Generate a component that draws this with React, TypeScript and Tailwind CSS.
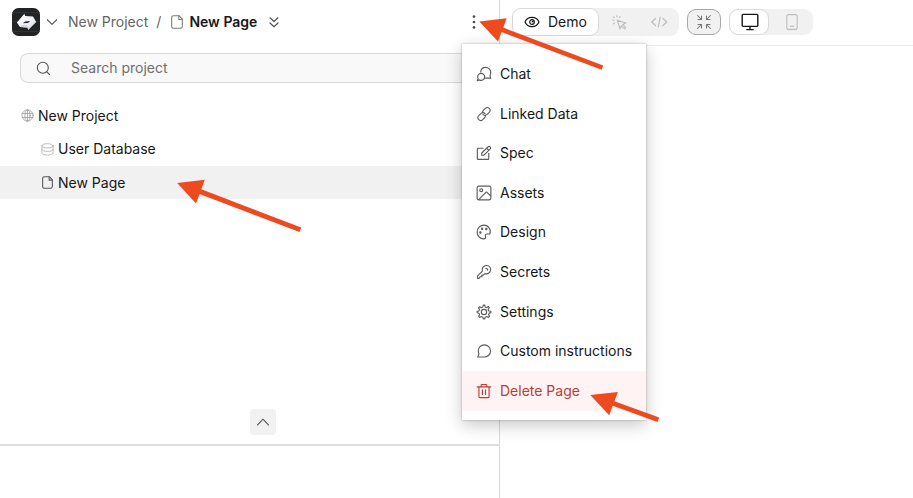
import React from "react";

type IconProps = { className?: string; children: React.ReactNode; sw?: number; box?: string };

function Icon({ className = "", children, sw = 1.5, box = "0 0 24 24" }: IconProps) {
  return (
    <svg
      viewBox={box}
      className={`shrink-0 ${className}`}
      fill="none"
      stroke="currentColor"
      strokeWidth={sw}
      strokeLinecap="round"
      strokeLinejoin="round"
    >
      {children}
    </svg>
  );
}

const PageShape = () => (
  <>
    <path d="M.7 2.6C.7 1.5 1.5 .7 2.6 .7H8L11.3 4.2V11.4C11.3 12.5 10.5 13.3 9.4 13.3H2.6C1.5 13.3 .7 12.5 .7 11.4Z" />
    <path d="M7.8 .9V4.4H11.1" />
  </>
);

const icons = {
  chat: (
    <>
      <path d="M7.5 22C10.54 22 13 19.54 13 16.5C13 13.46 10.54 11 7.5 11C4.46 11 2 13.46 2 16.5C2 17.5 2.27 18.44 2.73 19.25L1.4 22.6L4.75 21.27C5.56 21.73 6.5 22 7.5 22Z" />
      <path d="M13.2 18.6H22.6L21.4 14.6C22.1 13.3 22.6 11.6 22.6 9.7C22.6 5.2 19.1 1.5 14.7 1.5C10.4 1.5 7.2 4.6 6.8 8.9" />
    </>
  ),
  link: (
    <g transform="rotate(-45 12 12) translate(.6 .6) scale(.95)">
      <path d="M13.6 12.8C13.6 10 11.6 7.8 8.9 7.8H4C1.3 7.8 -.8 9.8 -.8 12.4C-.8 15 1.3 17 4 17H8.2C9.6 17 10.8 16.5 11.7 15.6" />
      <path d="M10.4 11.2C10.4 14 12.4 16.2 15.1 16.2H20C22.7 16.2 24.8 14.2 24.8 11.6C24.8 9 22.7 7 20 7H15.8C14.4 7 13.2 7.5 12.3 8.4" />
    </g>
  ),
  spec: (
    <>
      <path d="M19.5 12.5V21C19.5 21.6 19.1 22 18.5 22H2.5C1.9 22 1.5 21.6 1.5 21V5.5C1.5 4.9 1.9 4.5 2.5 4.5H10.5" />
      <path d="M8.5 15.5V12L18.4 2.2C19.2 1.4 20.6 1.4 21.4 2.2L21.8 2.6C22.6 3.4 22.6 4.8 21.8 5.6L12 15.5ZM16.3 4.6L19.4 7.7" />
    </>
  ),
  assets: (
    <>
      <rect x="1.2" y="1.2" width="21.6" height="21.6" rx="2.5" />
      <circle cx="7.6" cy="7.6" r="2.3" />
      <path d="M4 22L15.8 10.3L22.5 16.5" />
    </>
  ),
  design: (
    <>
      <path d="M21 15C24 8.5 18.8 1.2 12 1.2C5.8 1.2 1.2 6.1 1.2 12C1.2 18 5.5 22.8 11.4 22.8C14.4 22.8 15.2 21.2 14.4 19C13.5 16.4 14.6 14.9 17 15.1Z" />
      <circle cx="6.3" cy="12.8" r="1" fill="currentColor" />
      <circle cx="9" cy="7" r="1" fill="currentColor" />
      <circle cx="15.6" cy="7.3" r="1" fill="currentColor" />
    </>
  ),
  key: (
    <>
      <path d="M9.4 10.6C8.2 6.4 10.9 1.8 15.8 1.8C19.4 1.8 22.4 4.6 22.4 8.2C22.4 13 17.6 16 13.4 14.6L11 17H8.6V19.4H6.2L4.2 22H1.8V18.2Z" />
      <path d="M15 6.4C16.8 6.2 17.9 7.4 17.7 9" />
    </>
  ),
  settings: (
    <>
      <circle cx="12" cy="12" r="4.2" />
      <path d="M19.6 10.4L18.5 7.7L20.3 5L18.6 3.3L16.3 5.2L13.9 4.1L13.2 1.2H10.8L10.1 4.1L7.7 5.2L5.2 3.7L3.4 5.4L4.9 8L3.9 10.4L1.2 11V13.2L4 13.9L5 16.4L3.6 18.9L5.2 20.6L7.8 19.2L10.2 20.2L10.9 22.8H13.2L13.9 20.2L16.4 19.2L19 20.6L20.6 18.8L19.2 16.2L20.2 13.8L22.8 13V10.9Z" />
    </>
  ),
  bubble: (
    <path d="M12.6 21.5C18 21.5 22.3 17.2 22.3 12C22.3 6.6 18 2.3 12.6 2.3C7.2 2.3 2.9 6.6 2.9 12C2.9 13.8 3.3 15.1 4.1 16.5L2.2 21.5Z" />
  ),
  trash: (
    <>
      <path d="M20 6V20.5C20 21.8 19.3 22.5 18 22.5H6C4.7 22.5 4 21.8 4 20.5V6M1.2 5.5H22.8M7.5 5.5V3.3C7.5 2.3 8 1.8 9 1.8H15C16 1.8 16.5 2.3 16.5 3.3V5.5" />
      <path d="M9.6 10V17.5M14.4 10V17.5" />
    </>
  ),
};

const menu = [
  { label: "Chat", icon: icons.chat },
  { label: "Linked Data", icon: icons.link },
  { label: "Spec", icon: icons.spec },
  { label: "Assets", icon: icons.assets },
  { label: "Design", icon: icons.design },
  { label: "Secrets", icon: icons.key },
  { label: "Settings", icon: icons.settings },
  { label: "Custom instructions", icon: icons.bubble },
  { label: "Delete Page", icon: icons.trash, danger: true },
];

function Logo() {
  return (
    <svg viewBox="0 0 28 28" className="h-7 w-7 shrink-0">
      <defs>
        <linearGradient id="mark" x1="0" y1="0" x2="1" y2="1">
          <stop offset="0" stopColor="#ffffff" />
          <stop offset=".55" stopColor="#f0f0f7" />
          <stop offset="1" stopColor="#d2d3e0" />
        </linearGradient>
      </defs>
      <rect width="28" height="28" rx="6.5" fill="#222324" />
      <path d="M0 4.5H28M0 13.5H28M0 23.5H28" stroke="#3a3b3d" strokeWidth=".6" />
      <path
        d="M12.4 5.8L13.2 8L21 8.6L24.2 14L16.2 22L15.4 19.6L8 19L4.9 14.4Z"
        fill="url(#mark)"
      />
      <path d="M8 19L9.6 17L15 17L15.4 19.6Z" fill="#d4d5e2" />
      <path d="M10.8 15.3L13.2 13.4L18.2 12.9L16 15Z" fill="#292a2e" />
    </svg>
  );
}

function TopLeft() {
  return (
    <header className="flex h-[44px] items-center pl-3 pr-[18px]">
      <Logo />
      <Icon className="ml-[7px] h-[10px] w-[10px] text-[#555]" box="0 0 10 10" sw={1.1}>
        <path d="M.3 2.7L5 7.4L9.7 2.7" />
      </Icon>
      <span className="ml-[11px] text-[#646464]">New Project</span>
      <span className="ml-2 text-[#646464]">/</span>
      <Icon className="ml-[10px] h-[14px] w-[12px] text-[#777]" box="0 0 12 14" sw={1.05}>
        <PageShape />
      </Icon>
      <span className="ml-[6px] font-semibold text-[#171717]">New Page</span>
      <Icon className="ml-[12px] h-[11px] w-[10px] text-[#555]" box="0 0 10 11" sw={1.2}>
        <path d="M1 .8L5 4.5L9 .8M1 6L5 9.8L9 6" />
      </Icon>
      <svg viewBox="0 0 4 14" className="ml-auto mr-[5px] h-[14px] w-1 shrink-0" fill="#4d4d4d">
        <circle cx="2" cy="1.6" r="1.35" />
        <circle cx="2" cy="7" r="1.35" />
        <circle cx="2" cy="12.4" r="1.35" />
      </svg>
    </header>
  );
}

function Sidebar() {
  return (
    <aside className="flex w-[500px] shrink-0 flex-col border-r border-[#d9d9d9]">
      <TopLeft />
      <div className="ml-5 mt-[9px] flex h-[30px] items-center rounded-l-lg border border-r-0 border-[#d9d9d9] bg-[#f9f9f9] pl-[15px]">
        <Icon className="h-[15px] w-[15px] text-[#555]" box="0 0 15 15" sw={1.1}>
          <circle cx="6.8" cy="6.8" r="5.5" />
          <path d="M10.8 10.8L13.5 13.5" />
        </Icon>
        <span className="ml-5 text-[#6f6f6f]">Search project</span>
      </div>
      <div className="mt-[16px] flex h-[33px] items-center pl-[21px]">
        <Icon className="h-[13px] w-[13px] text-[#9b9b9b]" box="0 0 13 13" sw={0.8}>
          <circle cx="6.5" cy="6.5" r="5.6" />
          <ellipse cx="6.5" cy="6.5" rx="2.6" ry="5.6" />
          <path d="M1.3 4.5H11.7M1.3 8.5H11.7M6.5 1V12" />
        </Icon>
        <span className="ml-1 text-[#171717]">New Project</span>
      </div>
      <div className="flex h-[34px] items-center pl-[41px]">
        <Icon className="h-[13px] w-[13px] text-[#b3b3b3]" box="0 0 13 13" sw={0.9}>
          <ellipse cx="6.5" cy="2.8" rx="5.6" ry="2.1" />
          <path d="M.9 2.8V10C.9 12.8 12.1 12.8 12.1 10V2.8M.9 6.4C.9 9.2 12.1 9.2 12.1 6.4" />
        </Icon>
        <span className="ml-1 text-[#171717]">User Database</span>
      </div>
      <div className="flex h-[33px] items-center bg-[#f1f1f1] pl-[42px]">
        <Icon className="h-[13px] w-[11px] text-[#555]" box="0 0 12 14" sw={1.15}>
          <PageShape />
        </Icon>
        <span className="ml-[5px] text-[#171717]">New Page</span>
      </div>
      <div className="mt-auto flex h-[35px] justify-center pl-[27px]">
        <button className="flex h-[26px] w-[26px] items-center justify-center rounded-[4px] bg-[#f1f1f1]">
          <Icon className="h-[12px] w-[12px] text-[#5d5d5d]" box="0 0 12 12" sw={1.1}>
            <path d="M.5 9L6 3.2L11.5 9" />
          </Icon>
        </button>
      </div>
      <div className="h-[54px] border-t-2 border-[#dedede]" />
    </aside>
  );
}

function Toolbar() {
  return (
    <header className="flex h-[46px] items-center border-b border-[#ececec] pb-px pl-[12px]">
      <div className="flex h-[28px] w-[167px] items-center rounded-[9px] bg-[#f1f1f1]">
        <button className="flex h-[28px] w-[87px] items-center rounded-[9px] border border-[#d9d9d9] bg-white pl-[11px]">
          <Icon className="h-[16px] w-[16px] text-[#171717]" box="0 0 16 16" sw={1.2}>
            <path d="M1 8C3.6 1.9 12.4 1.9 15 8C12.4 14.1 3.6 14.1 1 8Z" />
            <circle cx="8" cy="8" r="2.3" />
            <path d="M8.2 7.8L9 7.2" />
          </Icon>
          <span className="ml-[8px] text-[#171717]">Demo</span>
        </button>
        <Icon className="ml-[13px] h-[15px] w-[15px] text-[#bcbcbc]" box="0 0 15 15" sw={1.1}>
          <path d="M5.2 5.2L14 8L10.7 9.4L13.7 12.6L12.5 13.8L9.4 10.7L8 14Z" />
          <path d="M4.8 .8L5.1 2M1.3 1.8L2.2 2.7M.8 5L2 5.2M1.5 8.8L2.4 7.9M8.2 1.6L7.5 2.5" />
        </Icon>
        <Icon className="ml-[24px] h-[16px] w-[17px] text-[#bcbcbc]" box="0 0 17 16" sw={1.2}>
          <path d="M4.5 4.5L.8 8L4.5 11.5M12 4.5L15.7 8L12 11.5M9.2 3L7.3 13" />
        </Icon>
      </div>
      <button className="ml-[8px] flex h-[26px] w-[34px] items-center justify-center rounded-[9px] border border-[#a8a8a8] bg-[#f1f1f1]">
        <Icon className="h-[16px] w-[16px] text-[#777]" box="0 0 16 16" sw={1.05}>
          <path d="M1.5 1.5L5.5 5.5M5.5 2V5.5H2M14.5 1.5L10.5 5.5M10.5 2V5.5H14M1.5 14.5L5.5 10.5M2 10.5H5.5V14M14.5 14.5L10.5 10.5M10.5 14V10.5H14" />
        </Icon>
      </button>
      <div className="ml-[8px] flex h-[26px] w-[84px] items-center rounded-[9px] bg-[#f1f1f1]">
        <button className="flex h-[26px] w-[40px] items-center justify-center rounded-[9px] border border-[#d9d9d9] bg-white">
          <Icon className="ml-px h-[18px] w-[18px] text-[#171717]" box="0 0 18 18" sw={1.4}>
            <rect x="1.2" y="1.4" width="15.6" height="12" rx="1" />
            <path d="M9 13.4V16.4M5.8 16.6H12.2" />
          </Icon>
        </button>
        <Icon className="ml-[17px] h-[16px] w-[12px] text-[#bcbcbc]" box="0 0 12 16" sw={1.1}>
          <rect x=".8" y=".6" width="10.4" height="14.8" rx="2" />
          <path d="M4.5 12.4H7.5" />
        </Icon>
      </div>
    </header>
  );
}

function PageMenu() {
  return (
    <div className="absolute left-[462px] top-[44px] w-[184px] bg-white pb-[9.6px] pt-[10.2px] shadow-[0_0_2px_rgba(0,0,0,0.3),0_5px_16px_rgba(0,0,0,0.22)]">
      {menu.map((m) => (
        <div
          key={m.label}
          className={`flex h-[39.6px] items-center pl-[14px] ${m.danger ? "bg-[#fff4f3] text-[#bd3b36]" : "text-[#171717]"}`}
        >
          <Icon className={`h-4 w-4 ${m.danger ? "text-[#bd3b36]" : "text-[#5c5c5c]"}`} sw={1.8} box="-.6 -.6 25.2 25.2">
            {m.icon}
          </Icon>
          <span className="ml-2 whitespace-nowrap">{m.label}</span>
        </div>
      ))}
    </div>
  );
}

function Arrows() {
  return (
    <svg className="pointer-events-none absolute inset-0 h-[498px] w-[913px]" viewBox="0 0 913 498" fill="#ed4a20">
      <path d="M479.3 21.6L506.7 18.2L503.3 27.6L603.2 65.4L601.6 69.8L501.6 32L498 41.4Z" />
      <path d="M177.2 183.1L204.8 179.8L201.3 189.3L301.2 227.4L299.5 232L199.6 194L196 203.5Z" />
      <path d="M590.3 395.1L617.9 391.9L614.4 401.3L659.2 417.5L657.5 422L612.8 405.8L609.2 415.2Z" />
    </svg>
  );
}

export default function App() {
  return (
    <div className="relative flex h-[498px] w-[913px] overflow-hidden bg-white font-['Inter',sans-serif] text-[14px] leading-5">
      <Sidebar />
      <main className="min-w-0 flex-1">
        <Toolbar />
      </main>
      <PageMenu />
      <Arrows />
    </div>
  );
}
